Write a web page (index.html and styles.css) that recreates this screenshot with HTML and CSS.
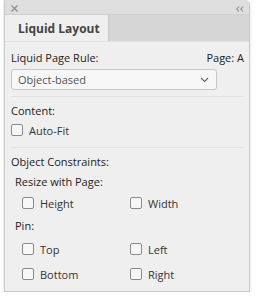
FILE: index.html
```html
<!DOCTYPE html>
<html lang="en">

<head>
  <meta charset="UTF-8">
  <title>Liquid Layout</title>
  <link rel="stylesheet" href="styles.css">
</head>

<body>
  <div class="panel">
    <div class="titlebar">
      <svg class="close" width="7" height="7" viewBox="0 0 7 7"><path d="M0.5 0.5 L6.5 6.5 M6.5 0.5 L0.5 6.5" stroke="#8c8c8c" stroke-width="1.2"/></svg>
      <svg class="collapse" width="8" height="6" viewBox="0 0 8 6"><path d="M3 0.5 L0.8 3 L3 5.5 M7 0.5 L4.8 3 L7 5.5" fill="none" stroke="#8c8c8c" stroke-width="1.1"/></svg>
    </div>
    <div class="tabs">
      <div class="tab">Liquid Layout</div>
    </div>
    <div class="content">
      <div class="row between">
        <span>Liquid Page Rule:</span>
        <span>Page: A</span>
      </div>
      <div class="select">
        <span>Object-based</span>
        <svg width="9" height="6" viewBox="0 0 9 6"><path d="M1 1 L4.5 4.5 L8 1" fill="none" stroke="#666" stroke-width="1.1"/></svg>
      </div>
      <div class="divider"></div>
      <div class="label">Content:</div>
      <label class="check"><span class="box"></span>Auto-Fit</label>
      <div class="divider"></div>
      <div class="label">Object Constraints:</div>
      <div class="label sub">Resize with Page:</div>
      <div class="grid">
        <label class="check"><span class="box"></span>Height</label>
        <label class="check"><span class="box"></span>Width</label>
      </div>
      <div class="label sub">Pin:</div>
      <div class="grid pins">
        <label class="check"><span class="box"></span>Top</label>
        <label class="check"><span class="box"></span>Left</label>
        <label class="check"><span class="box"></span>Bottom</label>
        <label class="check"><span class="box"></span>Right</label>
      </div>
    </div>
  </div>
</body>

</html>
```

FILE: styles.css
```css
* {
  padding: 0;
  margin: 0;
  box-sizing: border-box;
}

body {
  background-color: #fff;
  font-family: "Open Sans", "Noto Sans", sans-serif;
  font-size: 11px;
  color: #222;
}

.panel {
  width: 246px;
  height: 292px;
  margin-left: 4px;
  background-color: #efefef;
  border: 1px solid #c9c9c9;
  border-top: none;
  border-radius: 0 5px 0 0;
  box-shadow: 0 1px 3px rgba(0, 0, 0, 0.15);
  overflow: hidden;
}

.titlebar {
  height: 15px;
  background-color: #dedede;
  border-bottom: 1px solid #cfcfcf;
  display: flex;
  justify-content: space-between;
  align-items: center;
  padding: 3px 5px 0 6px;
}

.tabs {
  height: 27px;
  background-color: #d6d6d6;
  border-bottom: 1px solid #e2e2e2;
  display: flex;
}

.tab {
  width: 104px;
  background-color: #efefef;
  border-right: 1px solid #c8c8c8;
  font-size: 12px;
  font-weight: bold;
  color: #444;
  padding: 5px 0 0 13px;
}

.content {
  padding: 7px 5px 0 6px;
}

.row {
  display: flex;
}

.between {
  justify-content: space-between;
  height: 16px;
  align-items: center;
}

.select {
  margin-top: 4px;
  width: 206px;
  height: 21px;
  background-color: #f7f7f7;
  border: 1px solid #c6c6c6;
  border-radius: 3px;
  display: flex;
  justify-content: space-between;
  align-items: center;
  padding: 0 7px 0 6px;
  color: #555;
}

.divider {
  height: 1px;
  background-color: #e2e2e2;
  margin: 6px 0 6px;
}

.label {
  height: 16px;
  line-height: 16px;
}

.sub {
  padding-left: 4px;
  margin-top: 4px;
}

.check {
  display: flex;
  align-items: center;
  height: 22px;
  color: #333;
}

.box {
  width: 12px;
  height: 12px;
  border: 1px solid #8a8a8a;
  border-radius: 2px;
  background-color: #f7f7f7;
  margin-right: 6px;
}

.grid {
  display: grid;
  grid-template-columns: 108px 1fr;
  padding-left: 11px;
  row-gap: 3px;
  margin-top: 2px;
}

.pins {
  margin-top: 4px;
}
```
